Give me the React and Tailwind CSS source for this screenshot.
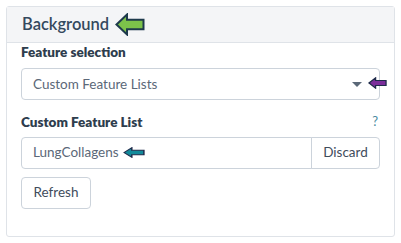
import React from "react";

const Arrow = ({ fill, stroke, className }) => (
  <svg viewBox="0 0 30 22" preserveAspectRatio="none" className={className}>
    <path
      d="M1.5 11 L12 1.5 L12 6.5 L28.5 6.5 L28.5 15.5 L12 15.5 L12 20.5 Z"
      fill={fill}
      stroke={stroke}
      strokeWidth="2"
      strokeLinejoin="miter"
    />
  </svg>
);

export default function App() {
  return (
    <div className="w-[401px] h-[243px] bg-white p-[6px] font-['Lato',sans-serif]">
      <div className="h-[231px] w-[389px] border border-[#dfe3e8] rounded-[3px] flex flex-col">
        {/* header */}
        <div className="h-[36px] bg-[#f4f5f7] border-b border-[#dfe3e8] flex items-center pl-[15px] gap-[6px]">
          <span className="text-[16.5px] font-semibold text-[#34495e]">Background</span>
          <Arrow fill="#7cc24a" stroke="#1e3a4c" className="w-[30px] h-[23px]" />
        </div>

        <div className="flex flex-col px-[14px]">
          <div className="text-[13.5px] font-extrabold text-[#2e3d4d] leading-[18px]">Feature selection</div>
          <div className="mt-[7px] h-[32px] w-[359px] border border-[#ccd3db] rounded-[4px] flex items-center pl-[11px] pr-[17px] relative">
            <span className="text-[13.5px] text-[#5b6878] flex-1">Custom Feature Lists</span>
            <span className="w-0 h-0 border-l-[5px] border-r-[5px] border-t-[5px] border-l-transparent border-r-transparent border-t-[#5b6878]" />
            <Arrow fill="#7b2d9a" stroke="#1e2a4a" className="absolute left-[346px] top-[8px] w-[19px] h-[12px]" />
          </div>

          <div className="mt-[12px] flex items-center justify-between">
            <span className="text-[13.5px] font-extrabold text-[#2e3d4d] leading-[18px]">Custom Feature List</span>
            <span className="text-[13px] text-[#4a8aa0] mr-[2px]">?</span>
          </div>
          <div className="mt-[5px] flex w-[359px] h-[32px]">
            <div className="flex-1 border border-[#ccd3db] rounded-l-[4px] flex items-center pl-[11px] gap-[4px]">
              <span className="text-[13.5px] text-[#5b6878]">LungCollagens</span>
              <Arrow fill="#128a9a" stroke="#1e2a4a" className="w-[22px] h-[11px]" />
            </div>
            <button className="w-[69px] border border-[#ccd3db] -ml-px rounded-r-[4px] text-[13.5px] text-[#3f4c5c]">
              Discard
            </button>
          </div>

          <button className="mt-[8px] w-[70px] h-[32px] border border-[#ccd3db] rounded-[4px] text-[13.5px] text-[#3f4c5c]">
            Refresh
          </button>
        </div>
      </div>
    </div>
  );
}
